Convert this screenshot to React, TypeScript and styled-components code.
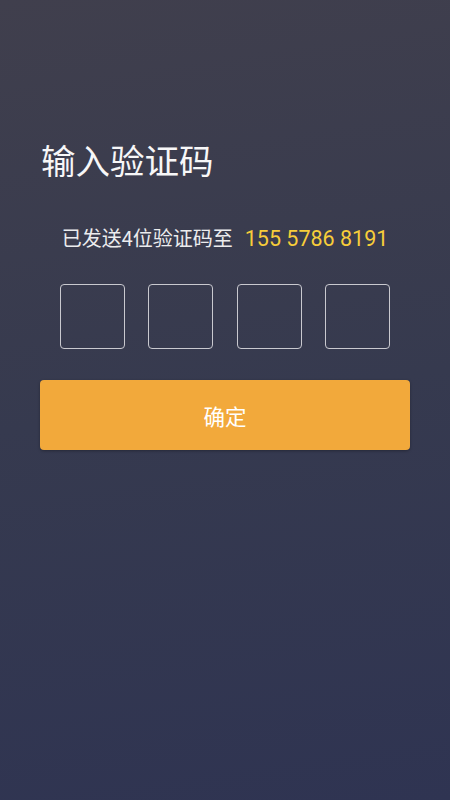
import React from "react";
import styled, { createGlobalStyle } from "styled-components";

const GlobalStyle = createGlobalStyle`
  html, body { margin: 0; padding: 0; }
  body { font-family: Roboto, "Noto Sans CJK SC", sans-serif; }
`;

const Screen = styled.div`
  width: 450px;
  height: 800px;
  box-sizing: border-box;
  padding: 142px 40px 0;
  background: linear-gradient(172deg, #403f4d 0%, #363a4f 50%, #2f3452 100%);
  display: flex;
  flex-direction: column;
`;

const Title = styled.h1`
  margin: 0 0 0 1px;
  font-family: "Noto Sans CJK SC", sans-serif;
  font-weight: 400;
  font-size: 34.5px;
  line-height: 34px;
  color: #f7f7f8;
`;

const SentRow = styled.div`
  margin-top: 50px;
  display: flex;
  justify-content: center;
  align-items: baseline;
  gap: 12px;
  height: 24px;
  line-height: 24px;
`;

const SentText = styled.span`
  font-family: "Noto Sans CJK SC", sans-serif;
  font-size: 20px;
  color: #ececee;
`;

const Phone = styled.span`
  font-family: Roboto, sans-serif;
  font-size: 21.5px;
  color: #f7cd3a;
`;

const CodeRow = styled.div`
  margin-top: 34px;
  padding: 0 20px;
  display: flex;
  justify-content: space-between;
`;

const CodeBox = styled.div`
  width: 65px;
  height: 65px;
  box-sizing: border-box;
  border: 1px solid #c9c9cf;
  border-radius: 4px;
`;

const Confirm = styled.button`
  margin-top: 31px;
  height: 70px;
  width: 100%;
  border: none;
  border-radius: 4px;
  background: #f2a93b;
  box-shadow: 0 1px 3px rgba(0, 0, 0, 0.3);
  color: #ffffff;
  font-family: "Noto Sans CJK SC", sans-serif;
  font-size: 21.5px;
  cursor: pointer;
`;

export default function App() {
  return (
    <>
      <GlobalStyle />
      <Screen>
        <Title>输入验证码</Title>
        <SentRow>
          <SentText>已发送4位验证码至</SentText>
          <Phone>155 5786 8191</Phone>
        </SentRow>
        <CodeRow>
          {[0, 1, 2, 3].map((i) => (
            <CodeBox key={i} />
          ))}
        </CodeRow>
        <Confirm>确定</Confirm>
      </Screen>
    </>
  );
}
